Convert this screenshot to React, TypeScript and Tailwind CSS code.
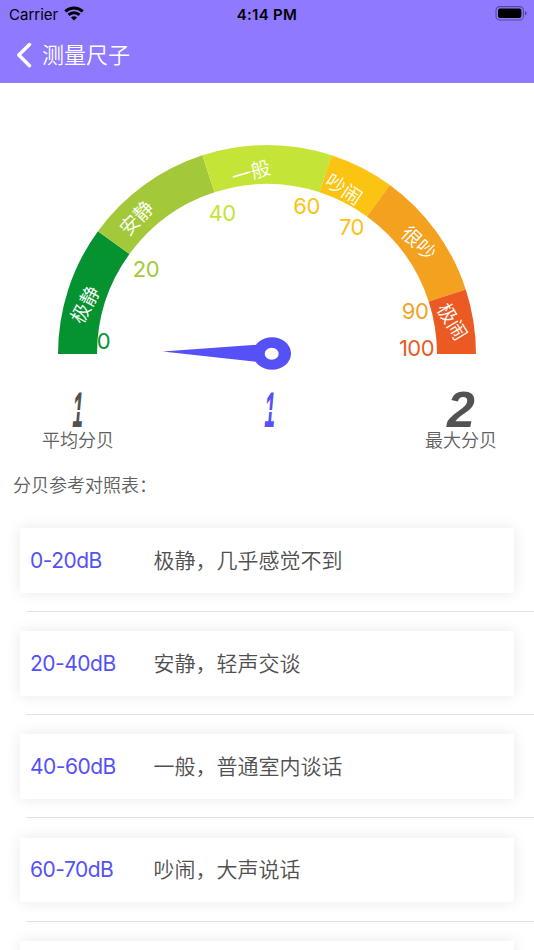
const SEGMENTS = [
    { from: 0, to: 36, color: '#049330' },
    { from: 36, to: 72, color: '#a3c93a' },
    { from: 72, to: 108, color: '#c4e538' },
    { from: 108, to: 126, color: '#fbc312' },
    { from: 126, to: 162, color: '#f4a11f' },
    { from: 162, to: 180, color: '#ec5a24' },
];

const LABELS = [
    { text: '极静', x: 85, y: 304.5, angle: -62 },
    { text: '安静', x: 136.5, y: 218, angle: -46 },
    { text: '一般', x: 251, y: 172, angle: -16 },
    { text: '吵闹', x: 344, y: 189, angle: 33 },
    { text: '很吵', x: 419, y: 243, angle: 43 },
    { text: '极闹', x: 452.5, y: 321.5, angle: 59 },
];

const TICKS = [
    { text: '0', x: 103.5, y: 341, color: '#049330' },
    { text: '20', x: 146, y: 268.5, color: '#a3c93a' },
    { text: '40', x: 222, y: 212.5, color: '#c4e538' },
    { text: '60', x: 306.5, y: 206, color: '#fbc312' },
    { text: '70', x: 351.5, y: 226.5, color: '#fbc312' },
    { text: '90', x: 415, y: 311, color: '#f4a11f' },
    { text: '100', x: 416.5, y: 347.5, color: '#ec5a24' },
];

const LEVELS = [
    { range: '0-20dB', desc: '极静，几乎感觉不到' },
    { range: '20-40dB', desc: '安静，轻声交谈' },
    { range: '40-60dB', desc: '一般，普通室内谈话' },
    { range: '60-70dB', desc: '吵闹，大声说话' },
];

const CX = 267;
const CY = 354;
const OUTER = 209;
const INNER = 170;

const point = (deg: number, r: number) => {
    const a = (deg * Math.PI) / 180;
    return `${CX - r * Math.cos(a)} ${CY - r * Math.sin(a)}`;
};

const arc = (from: number, to: number) =>
    `M${point(from, OUTER)} A${OUTER} ${OUTER} 0 0 1 ${point(to, OUTER)} L${point(to, INNER)} A${INNER} ${INNER} 0 0 0 ${point(from, INNER)}Z`;

const Header = () => (
    <header className="h-[83px] shrink-0 bg-[#8f7aff]">
        <div className="grid h-7 grid-cols-3 items-center pl-[9px] pr-[7px] text-[15px] leading-none text-black">
            <div className="flex items-center gap-[6px]">
                <span className="font-normal">Carrier</span>
                <svg className="-mt-[2px]" width="20" height="15" viewBox="0 0 20 15" fill="none" stroke="black" strokeWidth="3">
                    <path d="M1.3 5.4a12.5 12.5 0 0 1 17.4 0" />
                    <path d="M4.5 8.9a8 8 0 0 1 11 0" />
                    <path d="M10 14.5 6.9 11.6a4.5 4.5 0 0 1 6.2 0Z" fill="black" stroke="none" />
                </svg>
            </div>
            <span className="pr-[2px] text-center font-semibold tracking-[0.3px]">4:14 PM</span>
            <svg className="-mt-[2px] justify-self-end" width="32" height="15" viewBox="0 0 32 15">
                <rect x="1" y=".6" width="27.4" height="13.4" rx="3.8" fill="none" stroke="black" strokeOpacity=".4" strokeWidth="1.1" />
                <rect x="3" y="2.6" width="23.4" height="9.4" rx="2" />
                <path d="M30 5v4.6q1.6-.8 1.6-2.3T30 5Z" fillOpacity=".45" />
            </svg>
        </div>
        <div className="flex h-[53px] items-center gap-[9px] pl-4 text-[22px] text-white">
            <svg width="17" height="26" viewBox="0 0 17 26" fill="none" stroke="white" strokeWidth="3.4" strokeLinecap="round" strokeLinejoin="round">
                <path d="M13.5 2.5 2.8 13l10.7 10.7" />
            </svg>
            <h1 className="pt-[2px]">测量尺子</h1>
        </div>
    </header>
);

const Gauge = () => (
    <svg className="block shrink-0" width="534" height="300" viewBox="0 83 534 300">
        {SEGMENTS.map((s) => (
            <path key={s.from} d={arc(s.from, s.to)} fill={s.color} />
        ))}
        {LABELS.map((l) => (
            <text
                key={l.text}
                transform={`translate(${l.x} ${l.y}) rotate(${l.angle})`}
                y="7.3"
                fontSize="19.5"
                fill="white"
                textAnchor="middle"
            >
                {l.text}
            </text>
        ))}
        {TICKS.map((t) => (
            <text key={t.text} x={t.x} y={t.y + 8} fontSize="22" fontWeight="400" letterSpacing="-0.5" fill={t.color} textAnchor="middle">
                {t.text}
            </text>
        ))}
        {/* Needle */}
        <path d="M162.5 351.5 258 344.7V362Z" fill="#5551f7" />
        <ellipse cx="272" cy="353.5" rx="19" ry="16.2" fill="#5551f7" />
        <ellipse cx="271.7" cy="353.7" rx="7" ry="6" fill="white" />
    </svg>
);

// The "1" is squeezed and split in the middle, like the bars of an LCD
const ONE = "-skew-x-3 scale-x-[0.38] after:absolute after:inset-x-0 after:top-[18px] after:h-[2px] after:bg-white after:content-['']";

const Reading = ({ value, label }: { value: number; label?: string }) => (
    <div className="flex w-[72px] flex-col items-center">
        <span
            className={`relative h-[38px] font-['Liberation_Sans',sans-serif] text-[50px] font-bold italic leading-[36px] ${value === 1 ? ONE : ''} ${label ? 'text-[#525252]' : 'text-[#5551f7]'}`}
        >
            {value}
        </span>
        {label && <span className="whitespace-nowrap text-[18px] leading-[22px] text-[#606060]">{label}</span>}
    </div>
);

const LevelRow = ({ range, desc }: { range?: string; desc?: string }) => (
    <li className="h-[103.2px] shrink-0 pl-5 pt-[19.5px]">
        <div className="mr-5 flex h-[64.5px] items-center bg-white pl-[10px] text-[21px] shadow-[0_0_14px_rgba(0,0,0,0.09)]">
            <span className="w-[123.5px] font-normal tracking-[-0.5px] text-[#5551f7]">{range}</span>
            <span className="text-[#505050]">{desc}</span>
        </div>
        <div className="ml-[6px] mt-[18.5px] h-px bg-[#e2e2e4]" />
    </li>
);

const App = () => (
    <div className="flex h-[950px] w-[534px] flex-col overflow-hidden bg-white font-[Inter,'Noto_Sans_CJK_SC',sans-serif] font-[350]">
        <Header />
        <Gauge />
        <div className="flex h-[77px] shrink-0 justify-between pl-[42px] pr-[37px] pt-[9px]">
            <Reading value={1} label="平均分贝" />
            <Reading value={1} />
            <Reading value={2} label="最大分贝" />
        </div>
        <h2 className="h-[48.5px] shrink-0 pl-[13px] pt-[14px] text-[18px] leading-[24px] text-[#606060]">分贝参考对照表：</h2>
        <ul className="flex flex-col">
            {LEVELS.map((level) => (
                <LevelRow key={level.range} {...level} />
            ))}
            <LevelRow />
        </ul>
    </div>
);

export default App;
